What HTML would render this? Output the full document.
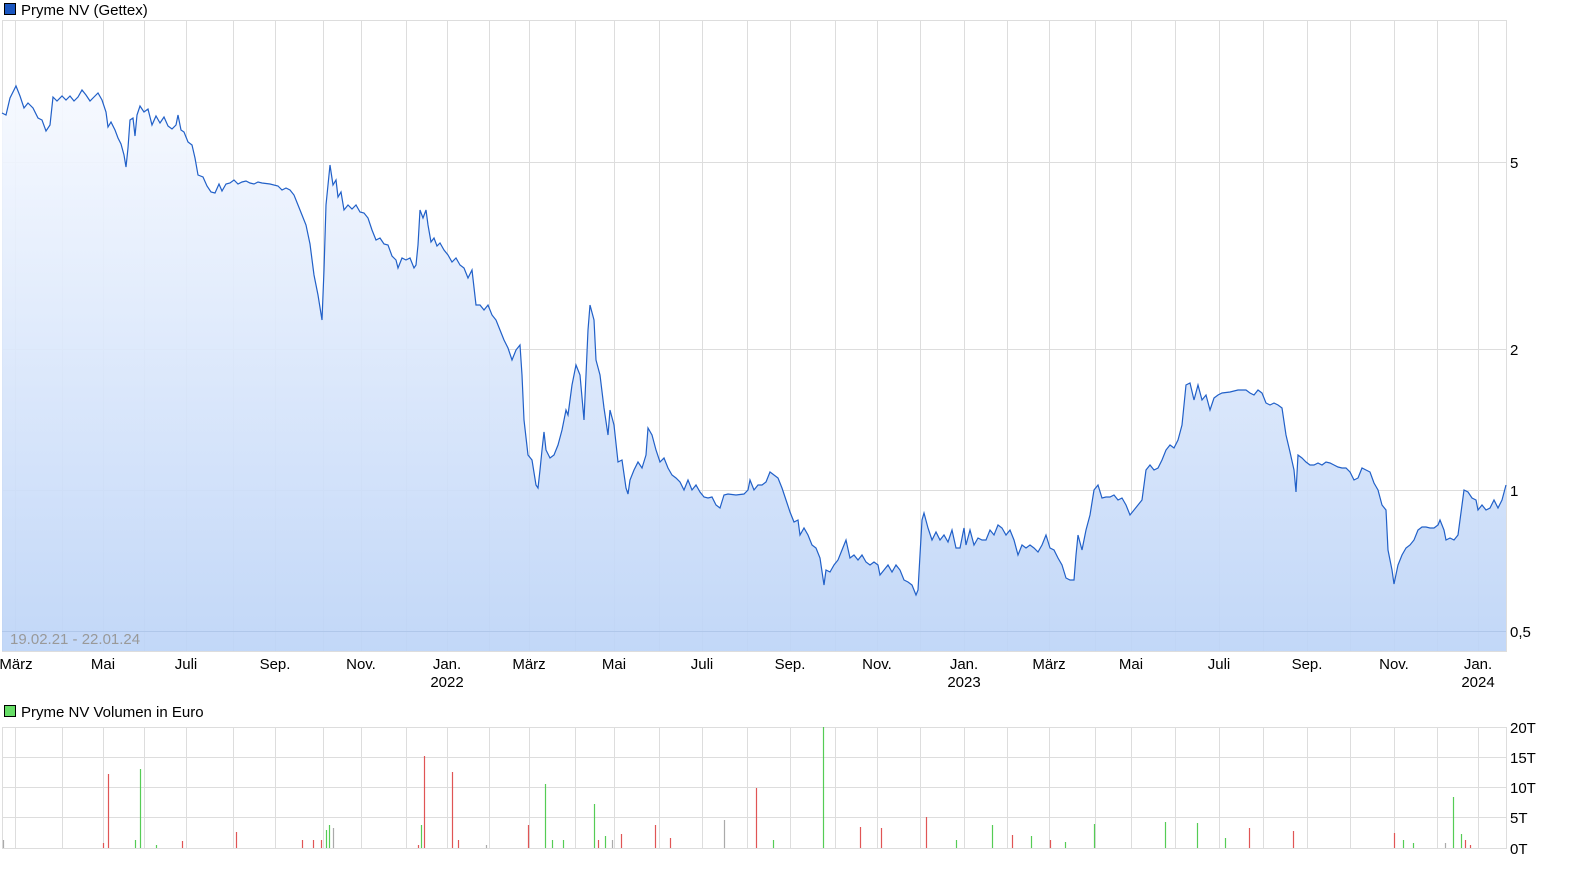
<!DOCTYPE html>
<html><head><meta charset="utf-8"><style>
html,body{margin:0;padding:0;background:#fff;width:1586px;height:874px;overflow:hidden}
svg{display:block;font-family:"Liberation Sans",sans-serif}
</style></head><body>
<svg width="1586" height="874" viewBox="0 0 1586 874">
<defs>
<linearGradient id="g" x1="0" y1="0" x2="0" y2="1">
<stop offset="0" stop-color="#f6f9ff"/><stop offset="1" stop-color="#bdd4f7"/>
</linearGradient>
</defs>
<!-- legend -->
<rect x="4.5" y="3.5" width="11" height="11" fill="#1a56c0" stroke="#000" stroke-width="1"/>
<text x="21" y="15" font-size="15" fill="#000">Pryme NV (Gettex)</text>
<rect x="2.5" y="20.5" width="1504" height="631" fill="#fff" stroke="#ddd"/>
<g id="vg" stroke="#ddd" stroke-width="1">
<path d="M15.5 20V651M62.5 20V651M103.5 20V651M144.5 20V651M186.5 20V651M233.5 20V651M275.5 20V651M323.5 20V651M361.5 20V651M406.5 20V651M447.5 20V651M489.5 20V651M529.5 20V651M575.5 20V651M614.5 20V651M659.5 20V651M702.5 20V651M747.5 20V651M790.5 20V651M835.5 20V651M877.5 20V651M920.5 20V651M964.5 20V651M1007.5 20V651M1049.5 20V651M1095.5 20V651M1131.5 20V651M1175.5 20V651M1219.5 20V651M1263.5 20V651M1307.5 20V651M1350.5 20V651M1394.5 20V651M1437.5 20V651M1478.5 20V651"/>
<path d="M2 162.5H1506M2 349.5H1506M2 490.5H1506M2 631.5H1506"/>
</g>
<path fill="url(#g)" fill-opacity="0.92" d="M2,113 L6,115 L10,98 L16,86 L20,96 L24,108 L28,103 L33,108 L38,118 L42,120 L46,131 L50,125 L53,97 L57,101 L62,96 L66,100 L70,96 L74,101 L78,97 L82,90 L86,95 L90,101 L94,97 L98,93 L102,100 L106,112 L108,127 L111,122 L115,130 L118,138 L121,144 L124,155 L126,167 L128,148 L130,120 L133,118 L135,136 L137,115 L140,106 L144,112 L148,109 L152,125 L156,116 L160,123 L164,117 L168,126 L172,129 L176,125 L178,115 L181,130 L184,132 L188,142 L192,145 L195,158 L198,175 L203,177 L207,186 L211,192 L215,193 L219,184 L222,191 L226,184 L230,183 L234,180 L238,184 L242,182 L246,181 L250,183 L254,184 L258,182 L262,183 L270,184 L278,186 L282,190 L286,188 L290,190 L294,195 L298,205 L302,215 L306,225 L310,244 L314,275 L318,295 L322,320 L324,270 L326,205 L330,165 L333,185 L336,180 L338,197 L341,192 L344,210 L348,205 L352,209 L356,205 L360,212 L364,213 L368,218 L372,230 L376,240 L380,238 L384,244 L388,245 L392,256 L396,260 L398,268 L402,258 L406,260 L410,258 L414,268 L416,265 L418,245 L420,210 L423,218 L426,210 L428,225 L431,242 L434,238 L437,246 L440,243 L444,250 L448,255 L452,262 L456,258 L460,265 L464,268 L468,278 L472,270 L476,305 L480,305 L484,310 L488,305 L492,315 L496,320 L500,330 L504,340 L508,348 L512,360 L516,350 L520,345 L522,375 L524,420 L528,455 L532,460 L536,485 L538,488 L540,470 L542,450 L544,432 L546,450 L550,458 L554,455 L558,445 L562,430 L566,410 L568,415 L572,385 L576,365 L580,375 L584,420 L588,330 L590,305 L594,320 L596,360 L600,375 L604,408 L608,435 L610,410 L614,425 L618,462 L622,460 L626,488 L628,494 L630,480 L634,470 L638,462 L642,468 L646,455 L648,428 L652,435 L656,450 L660,462 L664,458 L668,468 L672,475 L676,478 L680,482 L684,490 L688,480 L692,490 L696,485 L700,492 L704,497 L708,498 L712,497 L716,505 L720,508 L724,495 L728,494 L736,495 L744,494 L748,490 L750,480 L754,490 L758,485 L762,485 L766,482 L770,472 L774,475 L778,478 L782,488 L786,500 L790,512 L794,522 L798,520 L800,535 L804,528 L808,535 L812,545 L816,548 L820,558 L824,585 L826,570 L830,572 L834,565 L838,560 L842,550 L846,540 L850,558 L854,555 L858,560 L862,555 L866,562 L870,565 L874,562 L878,565 L880,575 L884,570 L888,565 L892,572 L896,565 L900,570 L904,580 L908,582 L912,585 L916,595 L918,590 L920,555 L922,520 L924,513 L928,528 L932,540 L936,532 L940,540 L944,535 L948,542 L952,530 L956,548 L960,548 L964,528 L966,545 L970,530 L974,545 L978,538 L982,540 L986,540 L990,530 L994,535 L998,525 L1002,528 L1006,535 L1010,530 L1014,540 L1018,555 L1022,545 L1026,548 L1030,545 L1034,548 L1038,552 L1042,545 L1046,535 L1050,548 L1054,550 L1058,558 L1062,565 L1066,578 L1070,580 L1074,580 L1076,555 L1078,535 L1082,550 L1086,530 L1090,515 L1094,490 L1098,485 L1102,498 L1106,497 L1110,497 L1114,495 L1118,500 L1122,498 L1126,505 L1130,515 L1134,510 L1138,505 L1142,500 L1146,470 L1150,465 L1154,470 L1158,468 L1162,460 L1166,450 L1170,445 L1174,448 L1178,440 L1182,425 L1186,385 L1190,383 L1194,400 L1198,385 L1202,400 L1206,395 L1210,410 L1214,398 L1218,395 L1222,393 L1230,392 L1238,390 L1246,390 L1250,393 L1254,395 L1258,390 L1262,393 L1266,403 L1270,405 L1274,403 L1278,405 L1282,408 L1286,435 L1290,452 L1294,470 L1296,492 L1298,455 L1302,458 L1306,462 L1310,465 L1314,465 L1318,463 L1322,465 L1326,462 L1330,463 L1334,465 L1338,467 L1342,468 L1346,468 L1350,472 L1354,480 L1358,478 L1362,468 L1366,470 L1370,472 L1374,483 L1378,490 L1382,505 L1386,510 L1388,550 L1392,570 L1394,584 L1398,565 L1402,555 L1406,548 L1410,545 L1414,540 L1418,530 L1422,527 L1426,527 L1430,528 L1434,528 L1438,525 L1440,520 L1444,530 L1446,540 L1450,538 L1454,540 L1458,535 L1462,505 L1464,490 L1468,492 L1472,498 L1476,500 L1478,510 L1482,505 L1486,510 L1490,508 L1494,500 L1498,508 L1502,500 L1506,485 L1506,651 L2,651 Z"/>
<g stroke="#9fb8e0" stroke-opacity="0.5" stroke-width="1"><path d="M2 631.5H1506"/></g>
<path fill="none" stroke="#2160c8" stroke-width="1.2" d="M2,113 L6,115 L10,98 L16,86 L20,96 L24,108 L28,103 L33,108 L38,118 L42,120 L46,131 L50,125 L53,97 L57,101 L62,96 L66,100 L70,96 L74,101 L78,97 L82,90 L86,95 L90,101 L94,97 L98,93 L102,100 L106,112 L108,127 L111,122 L115,130 L118,138 L121,144 L124,155 L126,167 L128,148 L130,120 L133,118 L135,136 L137,115 L140,106 L144,112 L148,109 L152,125 L156,116 L160,123 L164,117 L168,126 L172,129 L176,125 L178,115 L181,130 L184,132 L188,142 L192,145 L195,158 L198,175 L203,177 L207,186 L211,192 L215,193 L219,184 L222,191 L226,184 L230,183 L234,180 L238,184 L242,182 L246,181 L250,183 L254,184 L258,182 L262,183 L270,184 L278,186 L282,190 L286,188 L290,190 L294,195 L298,205 L302,215 L306,225 L310,244 L314,275 L318,295 L322,320 L324,270 L326,205 L330,165 L333,185 L336,180 L338,197 L341,192 L344,210 L348,205 L352,209 L356,205 L360,212 L364,213 L368,218 L372,230 L376,240 L380,238 L384,244 L388,245 L392,256 L396,260 L398,268 L402,258 L406,260 L410,258 L414,268 L416,265 L418,245 L420,210 L423,218 L426,210 L428,225 L431,242 L434,238 L437,246 L440,243 L444,250 L448,255 L452,262 L456,258 L460,265 L464,268 L468,278 L472,270 L476,305 L480,305 L484,310 L488,305 L492,315 L496,320 L500,330 L504,340 L508,348 L512,360 L516,350 L520,345 L522,375 L524,420 L528,455 L532,460 L536,485 L538,488 L540,470 L542,450 L544,432 L546,450 L550,458 L554,455 L558,445 L562,430 L566,410 L568,415 L572,385 L576,365 L580,375 L584,420 L588,330 L590,305 L594,320 L596,360 L600,375 L604,408 L608,435 L610,410 L614,425 L618,462 L622,460 L626,488 L628,494 L630,480 L634,470 L638,462 L642,468 L646,455 L648,428 L652,435 L656,450 L660,462 L664,458 L668,468 L672,475 L676,478 L680,482 L684,490 L688,480 L692,490 L696,485 L700,492 L704,497 L708,498 L712,497 L716,505 L720,508 L724,495 L728,494 L736,495 L744,494 L748,490 L750,480 L754,490 L758,485 L762,485 L766,482 L770,472 L774,475 L778,478 L782,488 L786,500 L790,512 L794,522 L798,520 L800,535 L804,528 L808,535 L812,545 L816,548 L820,558 L824,585 L826,570 L830,572 L834,565 L838,560 L842,550 L846,540 L850,558 L854,555 L858,560 L862,555 L866,562 L870,565 L874,562 L878,565 L880,575 L884,570 L888,565 L892,572 L896,565 L900,570 L904,580 L908,582 L912,585 L916,595 L918,590 L920,555 L922,520 L924,513 L928,528 L932,540 L936,532 L940,540 L944,535 L948,542 L952,530 L956,548 L960,548 L964,528 L966,545 L970,530 L974,545 L978,538 L982,540 L986,540 L990,530 L994,535 L998,525 L1002,528 L1006,535 L1010,530 L1014,540 L1018,555 L1022,545 L1026,548 L1030,545 L1034,548 L1038,552 L1042,545 L1046,535 L1050,548 L1054,550 L1058,558 L1062,565 L1066,578 L1070,580 L1074,580 L1076,555 L1078,535 L1082,550 L1086,530 L1090,515 L1094,490 L1098,485 L1102,498 L1106,497 L1110,497 L1114,495 L1118,500 L1122,498 L1126,505 L1130,515 L1134,510 L1138,505 L1142,500 L1146,470 L1150,465 L1154,470 L1158,468 L1162,460 L1166,450 L1170,445 L1174,448 L1178,440 L1182,425 L1186,385 L1190,383 L1194,400 L1198,385 L1202,400 L1206,395 L1210,410 L1214,398 L1218,395 L1222,393 L1230,392 L1238,390 L1246,390 L1250,393 L1254,395 L1258,390 L1262,393 L1266,403 L1270,405 L1274,403 L1278,405 L1282,408 L1286,435 L1290,452 L1294,470 L1296,492 L1298,455 L1302,458 L1306,462 L1310,465 L1314,465 L1318,463 L1322,465 L1326,462 L1330,463 L1334,465 L1338,467 L1342,468 L1346,468 L1350,472 L1354,480 L1358,478 L1362,468 L1366,470 L1370,472 L1374,483 L1378,490 L1382,505 L1386,510 L1388,550 L1392,570 L1394,584 L1398,565 L1402,555 L1406,548 L1410,545 L1414,540 L1418,530 L1422,527 L1426,527 L1430,528 L1434,528 L1438,525 L1440,520 L1444,530 L1446,540 L1450,538 L1454,540 L1458,535 L1462,505 L1464,490 L1468,492 L1472,498 L1476,500 L1478,510 L1482,505 L1486,510 L1490,508 L1494,500 L1498,508 L1502,500 L1506,485"/>
<text x="10" y="644" font-size="15" fill="#999">19.02.21 - 22.01.24</text>
<g font-size="15" fill="#000">
<text x="1510" y="168">5</text><text x="1510" y="355">2</text><text x="1510" y="496">1</text><text x="1510" y="637">0,5</text>
</g>
<g font-size="15" fill="#000" text-anchor="middle">
<text x="16" y="669">März</text><text x="103" y="669">Mai</text><text x="186" y="669">Juli</text><text x="275" y="669">Sep.</text><text x="361" y="669">Nov.</text><text x="447" y="669">Jan.</text><text x="447" y="687">2022</text>
<text x="529" y="669">März</text><text x="614" y="669">Mai</text><text x="702" y="669">Juli</text><text x="790" y="669">Sep.</text><text x="877" y="669">Nov.</text><text x="964" y="669">Jan.</text><text x="964" y="687">2023</text>
<text x="1049" y="669">März</text><text x="1131" y="669">Mai</text><text x="1219" y="669">Juli</text><text x="1307" y="669">Sep.</text><text x="1394" y="669">Nov.</text><text x="1478" y="669">Jan.</text><text x="1478" y="687">2024</text>
</g>
<!-- volume -->
<rect x="4.5" y="705.5" width="11" height="11" fill="#66dd66" stroke="#000"/>
<text x="21" y="717" font-size="15" fill="#000">Pryme NV Volumen in Euro</text>
<rect x="2.5" y="727.5" width="1504" height="121" fill="#fff" stroke="#ddd"/>
<g stroke="#ddd">
<path d="M2 757.5H1506M2 787.5H1506M2 817.5H1506"/>
<path d="M15.5 727V848M62.5 727V848M103.5 727V848M144.5 727V848M186.5 727V848M233.5 727V848M275.5 727V848M323.5 727V848M361.5 727V848M406.5 727V848M447.5 727V848M489.5 727V848M529.5 727V848M575.5 727V848M614.5 727V848M659.5 727V848M702.5 727V848M747.5 727V848M790.5 727V848M835.5 727V848M877.5 727V848M920.5 727V848M964.5 727V848M1007.5 727V848M1049.5 727V848M1095.5 727V848M1131.5 727V848M1175.5 727V848M1219.5 727V848M1263.5 727V848M1307.5 727V848M1350.5 727V848M1394.5 727V848M1437.5 727V848M1478.5 727V848"/>
</g>
<g stroke="#e05555" stroke-width="1.2">
<path d="M108.5 848V774M103.5 848V843M182.5 848V841M236.5 848V832M302.5 848V840M313.5 848V840M321.5 848V840M424.5 848V756M452.5 848V772M418.5 848V845M458.5 848V840M528.5 848V825M655.5 848V825M598.5 848V840M756.5 848V788M860.5 848V827M881.5 848V828M926.5 848V817M1012.5 848V835M1050.5 848V840M1249.5 848V828M1293.5 848V831M1394.5 848V833M1465.5 848V840M1470.5 848V845M621.5 848V834M670.5 848V838"/>
</g>
<g stroke="#55cc55" stroke-width="1.2">
<path d="M140.5 848V769M135.5 848V840M156.5 848V845M329.5 848V825M326.5 848V830M421.5 848V825M545.5 848V784M552.5 848V840M563.5 848V840M594.5 848V804M605.5 848V836M823.5 848V727M773.5 848V840M992.5 848V825M1094.5 848V824M1165.5 848V822M1197.5 848V823M1225.5 848V838M1453.5 848V797M1403.5 848V840M1413.5 848V843M1461.5 848V834M1031.5 848V836M956.5 848V840M1065.5 848V842"/>
</g>
<g stroke="#aaa" stroke-width="1.2"><path d="M3.5 848V840M333.5 848V828M724.5 848V820M486.5 848V845M612.5 848V840M1445.5 848V843"/></g>
<g font-size="15" fill="#000">
<text x="1510" y="733">20T</text><text x="1510" y="763">15T</text><text x="1510" y="793">10T</text><text x="1510" y="823">5T</text><text x="1510" y="854">0T</text>
</g>
</svg>
</body></html>
